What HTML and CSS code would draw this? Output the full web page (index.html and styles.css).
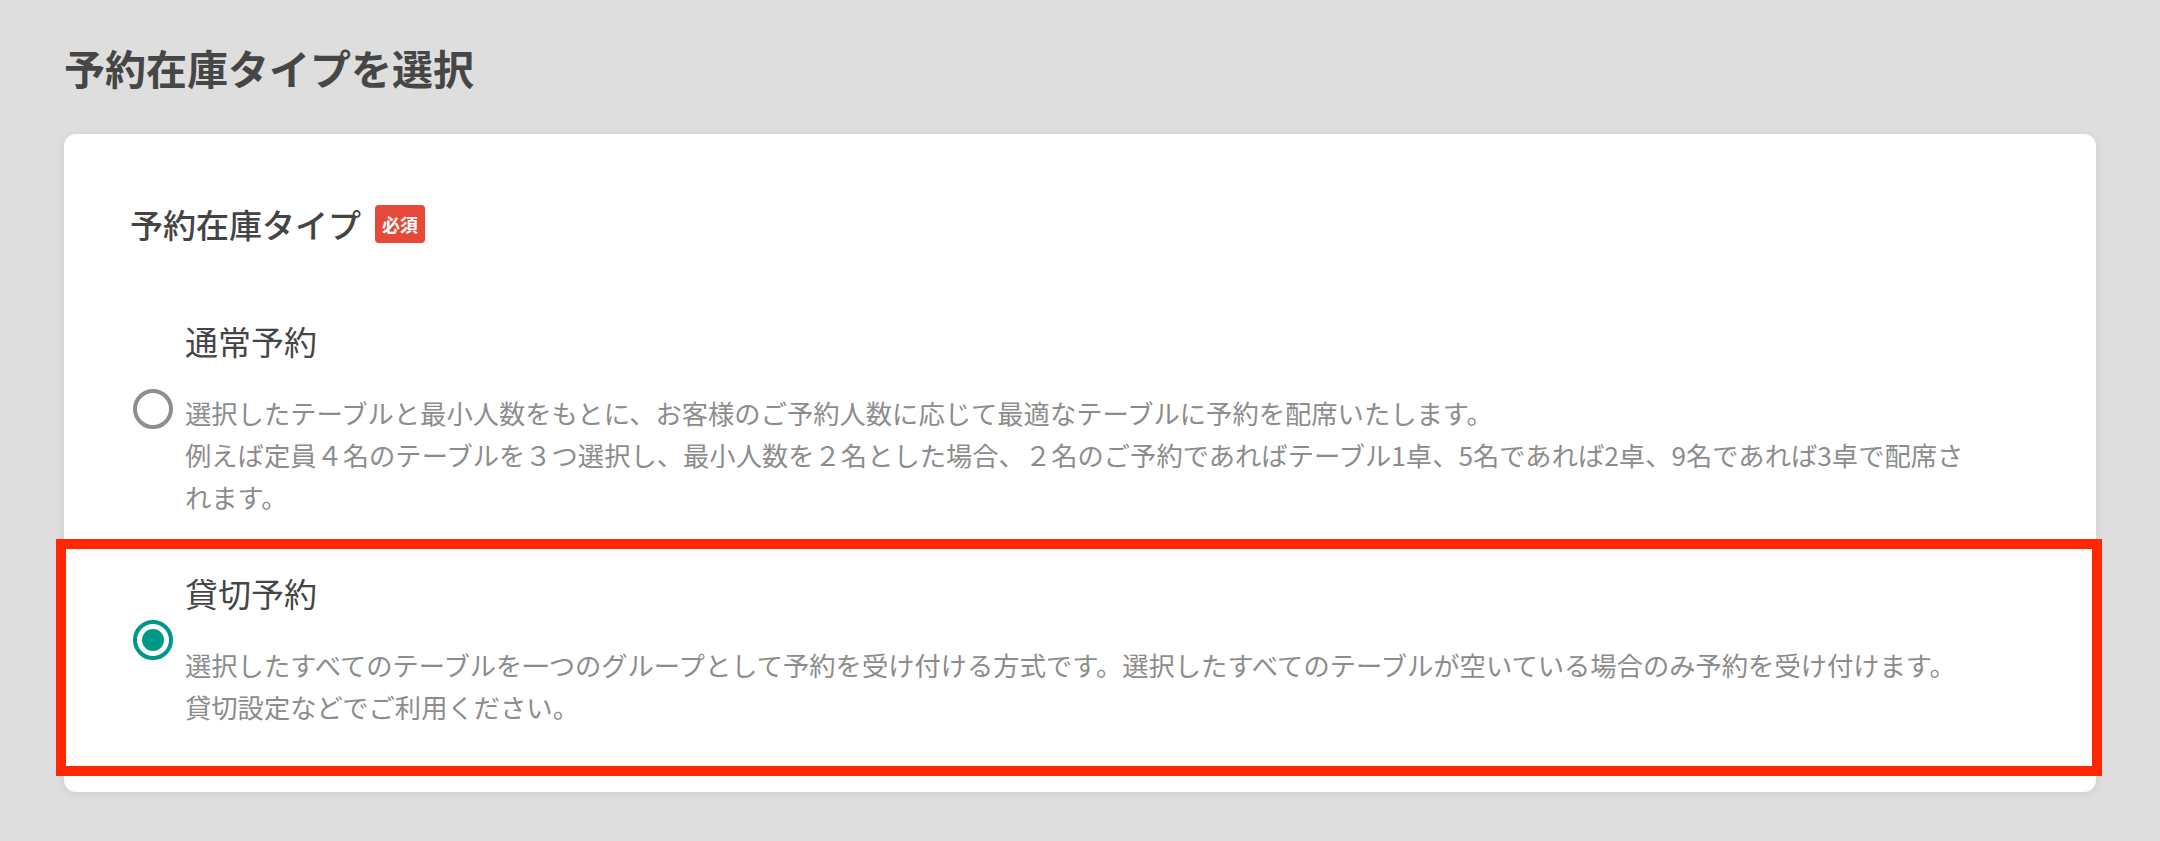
FILE: index.html
```html
<!DOCTYPE html>
<html lang="ja">
<head>
<meta charset="utf-8">
<title>予約在庫タイプを選択</title>
<link rel="stylesheet" href="styles.css">
</head>
<body>
<main class="page">
  <h1 class="page-title">予約在庫タイプを選択</h1>
  <section class="card">
    <div class="field-label">
      <span class="label-text">予約在庫タイプ</span>
      <span class="badge">必須</span>
    </div>
    <div class="options">
      <label class="option">
        <input type="radio" name="stock-type" class="radio">
        <span class="option-body">
          <span class="option-title">通常予約</span>
          <span class="option-desc">選択したテーブルと最小人数をもとに、お客様のご予約人数に応じて最適なテーブルに予約を配席いたします。<br>例えば定員４名のテーブルを３つ選択し、最小人数を２名とした場合、２名のご予約であればテーブル1卓、5名であれば2卓、9名であれば3卓で配席されます。</span>
        </span>
      </label>
      <label class="option option-marked">
        <input type="radio" name="stock-type" class="radio" checked>
        <span class="option-body">
          <span class="option-title">貸切予約</span>
          <span class="option-desc">選択したすべてのテーブルを一つのグループとして予約を受け付ける方式です。選択したすべてのテーブルが空いている場合のみ予約を受け付けます。<br>貸切設定などでご利用ください。</span>
        </span>
        <span class="mark-frame"></span>
      </label>
    </div>
  </section>
</main>
</body>
</html>
```

FILE: styles.css
```css
html, body {
  margin: 0;
  padding: 0;
}

body {
  background: #dedede;
  font-family: "Noto Sans CJK JP", "Noto Sans", sans-serif;
  color: #444444;
}

.page {
  padding: 39px 64px 40px 64px;
}

.page-title {
  margin: 0;
  font-size: 41px;
  line-height: 57px;
  font-weight: 700;
  color: #464646;
}

.card {
  margin-top: 38px;
  background: #ffffff;
  border-radius: 12px;
  box-shadow: 0 2px 10px rgba(0, 0, 0, 0.08);
  padding: 71px 111px 64px 66px;
}

.field-label {
  display: flex;
  align-items: center;
  gap: 14px;
  height: 38px;
}

.label-text {
  font-size: 33px;
  line-height: 38px;
  font-weight: 500;
  color: #444444;
}

.badge {
  display: inline-flex;
  align-items: center;
  justify-content: center;
  height: 38px;
  padding: 0 7px;
  background: #e6483a;
  color: #ffffff;
  font-size: 18px;
  font-weight: 700;
  border-radius: 4px;
}

.options {
  margin-top: 74px;
  display: flex;
  flex-direction: column;
  gap: 51px;
}

.option {
  position: relative;
  display: flex;
  align-items: center;
  gap: 12px;
  padding-left: 3px;
  cursor: pointer;
}

.radio {
  appearance: none;
  -webkit-appearance: none;
  margin: 0 0 17px 0;
  flex: 0 0 40px;
  width: 40px;
  height: 40px;
  box-sizing: border-box;
  border: 4px solid #8e8e8e;
  border-radius: 50%;
  background: #ffffff;
  display: flex;
  align-items: center;
  justify-content: center;
}

.radio:checked {
  border-color: #00968a;
}

.radio:checked::after {
  content: "";
  width: 22px;
  height: 22px;
  border-radius: 50%;
  background: #00968a;
}

.option-body {
  display: flex;
  flex-direction: column;
  min-width: 0;
}

.option-title {
  font-size: 33px;
  line-height: 48px;
  font-weight: 400;
  color: #454545;
}

.option-desc {
  margin-top: 27px;
  font-size: 26.3px;
  line-height: 42px;
  color: #8c8c8c;
}

.mark-frame {
  position: absolute;
  top: -30px;
  bottom: -48px;
  left: -74px;
  right: -117px;
  border: 10px solid #ff2600;
  pointer-events: none;
}
```
